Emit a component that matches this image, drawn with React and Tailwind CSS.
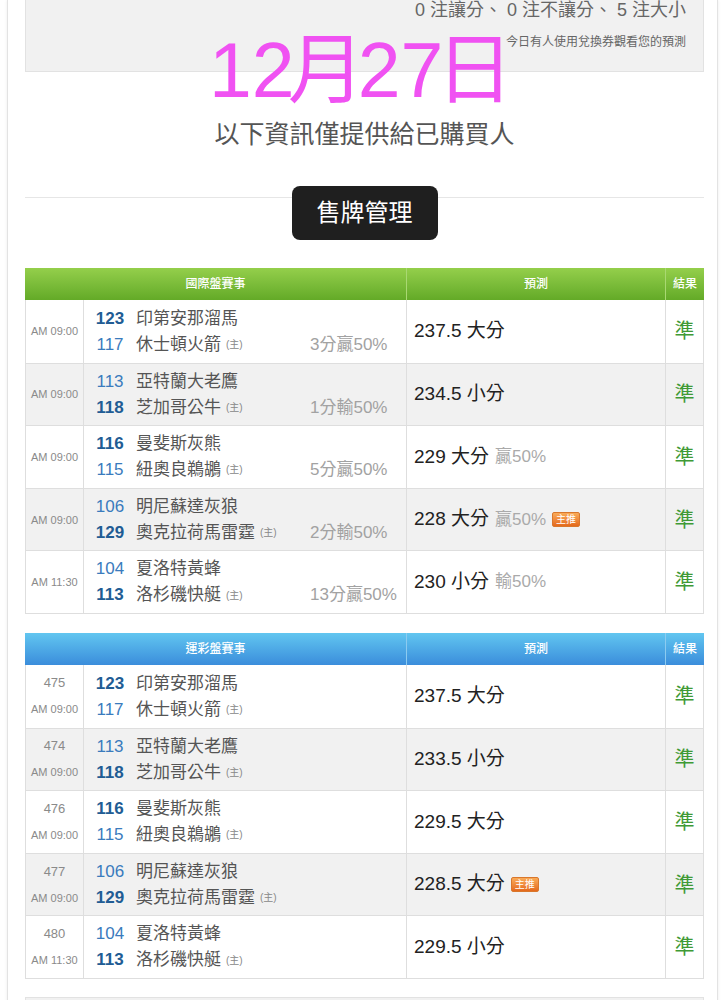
import React from 'react';

const FONT = "font-['Liberation_Sans','Noto_Sans_CJK_TC',sans-serif]";

const intl = [
  { time: 'AM 09:00', a: ['123', '印第安那溜馬'], b: ['117', '休士頓火箭'], fav: 'a', hc: '3分贏50%', pred: '237.5 大分' },
  { time: 'AM 09:00', a: ['113', '亞特蘭大老鷹'], b: ['118', '芝加哥公牛'], fav: 'b', hc: '1分輸50%', pred: '234.5 小分' },
  { time: 'AM 09:00', a: ['116', '曼斐斯灰熊'], b: ['115', '紐奧良鵜鶘'], fav: 'a', hc: '5分贏50%', pred: '229 大分', extra: '贏50%' },
  { time: 'AM 09:00', a: ['106', '明尼蘇達灰狼'], b: ['129', '奧克拉荷馬雷霆'], fav: 'b', hc: '2分輸50%', pred: '228 大分', extra: '贏50%', hot: true },
  { time: 'AM 11:30', a: ['104', '夏洛特黃蜂'], b: ['113', '洛杉磯快艇'], fav: 'b', hc: '13分贏50%', pred: '230 小分', extra: '輸50%' },
];

const lottery = [
  { no: '475', time: 'AM 09:00', a: ['123', '印第安那溜馬'], b: ['117', '休士頓火箭'], fav: 'a', pred: '237.5 大分' },
  { no: '474', time: 'AM 09:00', a: ['113', '亞特蘭大老鷹'], b: ['118', '芝加哥公牛'], fav: 'b', pred: '233.5 小分' },
  { no: '476', time: 'AM 09:00', a: ['116', '曼斐斯灰熊'], b: ['115', '紐奧良鵜鶘'], fav: 'a', pred: '229.5 大分' },
  { no: '477', time: 'AM 09:00', a: ['106', '明尼蘇達灰狼'], b: ['129', '奧克拉荷馬雷霆'], fav: 'b', pred: '228.5 大分', hot: true },
  { no: '480', time: 'AM 11:30', a: ['104', '夏洛特黃蜂'], b: ['113', '洛杉磯快艇'], fav: 'b', pred: '229.5 小分' },
];

const HotBadge = () => (
  <span className="ml-[6px] inline-block rounded-[2px] border border-[#d9772c] bg-linear-to-b from-[#f9ab58] to-[#e4691b] px-[3px] text-[10px] leading-[13px] text-white">
    主推
  </span>
);

const TeamLine = ({ num, name, bold, host, hc }) => (
  <div className="flex h-[26px] items-center">
    <span className={`w-[44px] text-center text-[17px] ${bold ? 'font-bold text-[#215c94]' : 'text-[#3a7bbd]'}`}>{num}</span>
    <span className="ml-[4px] flex w-[174px] items-center text-[17px] text-[#555]">
      {name}
      {host && <span className="ml-[5px] text-[10px] text-[#888]">(主)</span>}
    </span>
    {hc && <span className="text-[17px] text-[#a2a2a2]">{hc}</span>}
  </div>
);

const Row = ({ r, i }) => (
  <div className={`grid h-[62.6px] grid-cols-[57px_323px_259px_38px] border-t border-[#dedede] ${i % 2 ? 'bg-[#f1f1f1]' : 'bg-white'}`}>
    <div className="flex flex-col items-center justify-center text-[#8a8a8a]">
      {r.no && <div className="text-[13px] leading-[26px]">{r.no}</div>}
      <div className="text-[11px] leading-[26px]">{r.time}</div>
    </div>
    <div className="flex flex-col justify-center border-l border-[#dedede] pl-[4px]">
      <TeamLine num={r.a[0]} name={r.a[1]} bold={r.fav === 'a'} />
      <TeamLine num={r.b[0]} name={r.b[1]} bold={r.fav === 'b'} host hc={r.hc} />
    </div>
    <div className="flex items-center border-l border-[#dedede] pl-[7px]">
      <span className="text-[19px] text-[#222]">{r.pred}</span>
      {r.extra && <span className="ml-[6px] text-[17px] text-[#aaa]">{r.extra}</span>}
      {r.hot && <HotBadge />}
    </div>
    <div className="flex items-center justify-center border-l border-[#dedede] text-[20px] text-[#3f9a35]">準</div>
  </div>
);

const Table = ({ title, rows, head, sep }) => (
  <div>
    <div className={`grid h-[32px] grid-cols-[381px_259px_39px] text-[12px] font-medium text-white ${head}`}>
      <div className="flex items-center justify-center">{title}</div>
      <div className={`flex items-center justify-center border-l ${sep}`}>預測</div>
      <div className={`flex items-center justify-center border-l ${sep}`}>結果</div>
    </div>
    <div className="border-x border-b border-[#dedede] [&>div:first-child]:border-t-0">
      {rows.map((r, i) => (
        <Row key={i} r={r} i={i} />
      ))}
    </div>
  </div>
);

export default function App() {
  return (
    <div className={`h-[1000px] overflow-hidden bg-white ${FONT}`}>
      <div className="relative ml-[7px] min-h-[1000px] w-[711px] border-x border-[#e3e3e3] pl-[17px] pr-[13px] shadow-[0_0_3px_rgba(0,0,0,0.08)]">
        <div className="h-[72px] border-x border-b border-[#e2e2e2] bg-[#f1f1f1] pr-[17px] text-right text-[#666]">
          <div className="text-[18px] leading-[20px]">0 注讓分、 0 注不讓分、 5 注大小</div>
          <div className="mt-[14px] text-[12px] leading-[16px]">今日有人使用兌換券觀看您的預測</div>
        </div>

        <div className="mt-[44px] text-center text-[25px] leading-[36px] text-[#555]">以下資訊僅提供給已購買人</div>

        <div className="mt-[45px] h-px bg-[#e6e6e6]" />
        <div className="relative mx-auto -mt-[12px] flex h-[54px] w-[146px] items-center justify-center rounded-[8px] bg-[#1f1f1f] text-[24px] text-white">
          售牌管理
        </div>

        <div className="mt-[28px]">
          <Table title="國際盤賽事" rows={intl} head="bg-linear-to-b from-[#94cf4b] to-[#63aa27]" sep="border-[#a9d872]" />
        </div>

        <div className="mt-[19px]">
          <Table title="運彩盤賽事" rows={lottery} head="bg-linear-to-b from-[#62c6f0] to-[#3b8ddb]" sep="border-[#8ccbf0]" />
        </div>

        <div className="mt-[18px] h-[60px] border border-[#e2e2e2] bg-[#f1f1f1]" />

        <div className="absolute left-[201px] top-[32px] whitespace-nowrap text-[77px] leading-none text-[#f052f2]">
          12<span className="-mx-[7px]">月</span>27<span className="-mx-[7px]">日</span>
        </div>
      </div>
    </div>
  );
}
